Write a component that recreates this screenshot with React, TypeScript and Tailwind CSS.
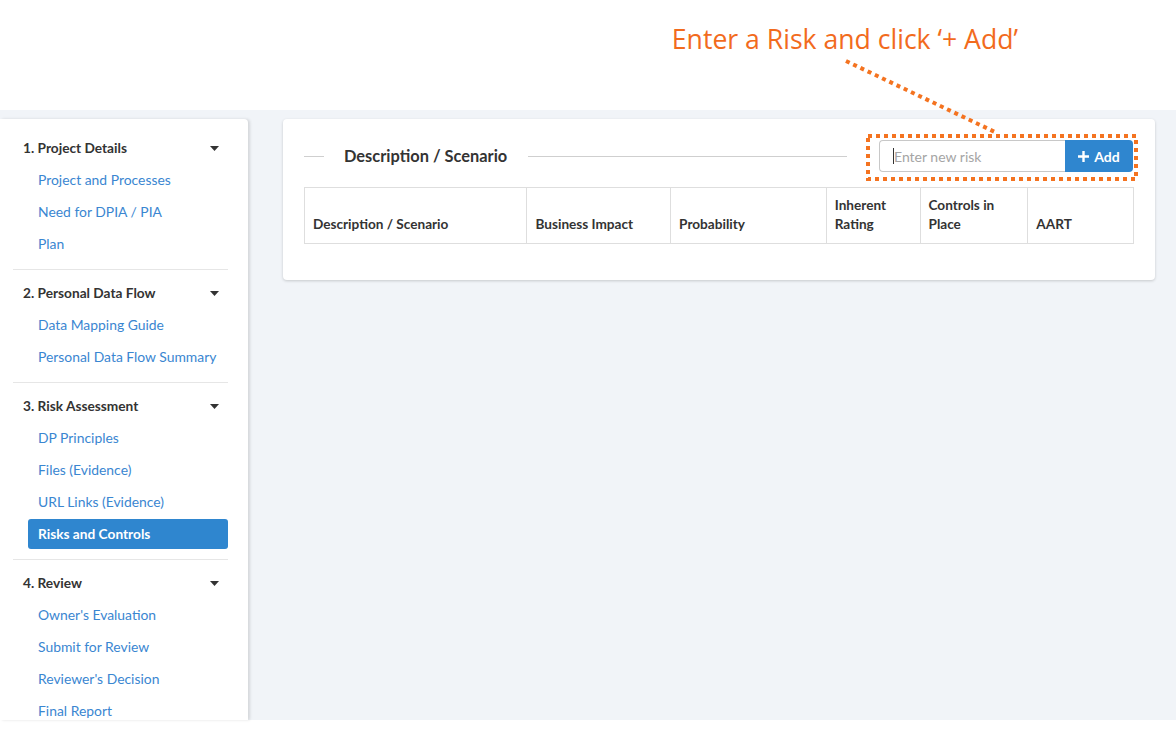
import React from "react";

type Section = { title: string; links: string[]; active?: string };

const sections: Section[] = [
  { title: "1. Project Details", links: ["Project and Processes", "Need for DPIA / PIA", "Plan"] },
  { title: "2. Personal Data Flow", links: ["Data Mapping Guide", "Personal Data Flow Summary"] },
  {
    title: "3. Risk Assessment",
    links: ["DP Principles", "Files (Evidence)", "URL Links (Evidence)", "Risks and Controls"],
    active: "Risks and Controls",
  },
  { title: "4. Review", links: ["Owner's Evaluation", "Submit for Review", "Reviewer's Decision", "Final Report"] },
];

function Caret() {
  return (
    <svg width="9" height="5" viewBox="0 0 9 5" className="mr-[9px]">
      <path d="M0 0 H9 L4.5 5 Z" fill="#333" />
    </svg>
  );
}

function Sidebar() {
  return (
    <div className="w-[248px] h-full bg-white rounded-tr-[4px] shadow-[2px_0_3px_rgba(0,0,0,0.12)] pt-[13px] pl-[13px] pr-[20px] overflow-hidden">
      {sections.map((s, i) => (
        <div key={s.title}>
          {i > 0 && <div className="border-t border-[#e6e6e6] mt-[9px] mb-[7px]" />}
          <div className="h-8 flex items-center justify-between pl-[10px] text-[13.7px] font-bold text-[#333]">
            <span>{s.title}</span>
            <Caret />
          </div>
          {s.links.map((l) =>
            l === s.active ? (
              <div key={l} className="h-8 flex items-center pl-[15px]">
                <div className="h-[30px] w-full rounded-[3px] bg-[#2f86cf] text-white text-[13.7px] font-bold flex items-center pl-[10px]">
                  {l}
                </div>
              </div>
            ) : (
              <div key={l} className="h-8 flex items-center pl-[25px] text-[13.9px] text-[#3a86d1]">
                {l}
              </div>
            )
          )}
        </div>
      ))}
    </div>
  );
}

const cols: { label: React.ReactNode; w: string }[] = [
  { label: "Description / Scenario", w: "w-[222px]" },
  { label: "Business Impact", w: "w-[144px]" },
  { label: "Probability", w: "w-[156px]" },
  { label: <>Inherent<br />Rating</>, w: "w-[94px]" },
  { label: <>Controls in<br />Place</>, w: "w-[108px]" },
  { label: "AART", w: "w-[106px]" },
];

function Card() {
  return (
    <div className="w-[872px] h-[161px] bg-white rounded-[4px] shadow-[0_1px_3px_rgba(0,0,0,0.18)] pl-[21px] pr-[21px] pt-[21px]">
      <div className="h-[32px] flex items-center">
        <div className="w-[20px] border-t border-[#cfcfcf]" />
        <div className="ml-[20px] text-[16.4px] font-bold text-[#333]">Description / Scenario</div>
        <div className="ml-[21px] mr-[32px] flex-1 border-t border-[#cfcfcf]" />
        <div className="flex h-[32px] mr-[1px]">
          <div className="w-[186px] h-full border border-[#c8c8c8] border-r-0 rounded-l-[4px] flex items-center pl-[13px] text-[14px] text-[#a5a5a5]">
            <span className="w-px h-[16px] bg-[#333]" />
            Enter new risk
          </div>
          <div className="w-[68px] h-full bg-[#2f86cf] rounded-r-[4px] flex items-center justify-center gap-[5px] text-white text-[14px] font-bold">
            <svg width="11" height="11" viewBox="0 0 11 11">
              <path d="M5.5 0 V11 M0 5.5 H11" stroke="#fff" strokeWidth="2.4" />
            </svg>
            Add
          </div>
        </div>
      </div>
      <div className="mt-[15px] flex border border-[#dedede] w-[830px] h-[57px]">
        {cols.map((c, i) => (
          <div
            key={i}
            className={`${c.w} ${i > 0 ? "border-l border-[#dedede]" : ""} flex items-end pl-[8px] pb-[9px] text-[13.6px] font-bold text-[#333] leading-[19px]`}
          >
            <div>{c.label}</div>
          </div>
        ))}
      </div>
    </div>
  );
}

export default function App() {
  return (
    <div className="relative w-[1176px] h-[734px] bg-white overflow-hidden" style={{ fontFamily: "Lato, 'Noto Sans', sans-serif" }}>
      <div className="h-[110px] flex justify-end pr-[158px] pt-[21px]">
        <div className="text-[26.6px] text-[#f26b1d] leading-[36px]" style={{ fontFamily: "'Open Sans', Lato, sans-serif" }}>
          Enter a Risk and click ‘+ Add’
        </div>
      </div>
      <div className="h-[610px] bg-[#f1f4f8] flex pt-[9px]">
        <Sidebar />
        <div className="pl-[35px]">
          <Card />
        </div>
      </div>
      <svg className="absolute left-0 top-0 pointer-events-none" width="1176" height="734">
        <line x1="846" y1="61" x2="997" y2="133" stroke="#f47320" strokeWidth="4" strokeDasharray="4 4" />
        <rect x="868" y="136" width="268" height="43" fill="none" stroke="#f47320" strokeWidth="4" strokeDasharray="4 4" />
      </svg>
    </div>
  );
}
